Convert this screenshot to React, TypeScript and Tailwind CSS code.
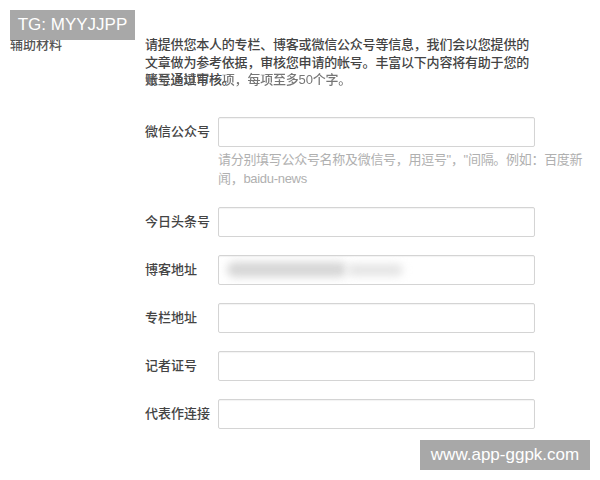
import React from 'react';

const FIELDS = ['今日头条号', '博客地址', '专栏地址', '记者证号', '代表作连接'];

const font = { fontFamily: '"Liberation Sans", "Noto Sans CJK SC", sans-serif' };

const Field: React.FC<{ label: string; blurred?: boolean }> = ({ label, blurred }) => (
    <div className="flex items-center h-[30px]">
        <div className="w-[73px] text-[13px] font-medium text-[#444]">{label}</div>
        <div className="relative w-[318px] h-[30px] border border-[#d4d4d4] rounded-[2px] bg-white shadow-[inset_0_1px_1px_rgba(0,0,0,0.05)] overflow-hidden">
            {blurred && (
                <div className="flex items-center h-full pl-[8px]">
                    <div className="w-[120px] h-[15px] rounded-full bg-[#d6d6d6] blur-[4px]" />
                    <div className="w-[56px] h-[12px] rounded-full bg-[#e4e4e4] blur-[4px]" />
                </div>
            )}
        </div>
    </div>
);

const App: React.FC = () => {
    return (
        <div className="relative w-[600px] h-[480px] bg-white overflow-hidden" style={font}>
            <div className="flex pt-[36px]">
                {/* left label */}
                <div className="w-[145px] pl-[10px] text-[13px] leading-[18px] font-medium text-[#555]">辅助材料</div>

                {/* right column */}
                <div className="w-[390px]">
                    <div className="relative text-[13px] leading-[17.5px] font-medium text-[#444] whitespace-nowrap tracking-[-0.2px]">
                        <p>请提供您本人的专栏、博客或微信公众号等信息，我们会以您提供的</p>
                        <p>文章做为参考依据，审核您申请的帐号。丰富以下内容将有助于您的</p>
                        <p>账号通过审核。</p>
                        {/* second sentence drawn over the third line, as in the source */}
                        <span className="absolute left-0 top-[35px] text-[#555] opacity-80">请至少填写一项，每项至多50个字。</span>
                    </div>

                    <div className="mt-[28px]">
                        <Field label="微信公众号" />
                        <div className="ml-[73px] mt-[3px] text-[13px] leading-[19px] text-[#b0b0b0] whitespace-nowrap tracking-[-0.3px]">
                            <p>请分别填写公众号名称及微信号，用逗号"，"间隔。例如：百度新</p>
                            <p>闻，baidu-news</p>
                        </div>
                    </div>

                    <div className="flex flex-col gap-[18px] mt-[19px]">
                        {FIELDS.map((f) => (
                            <Field key={f} label={f} blurred={f === '博客地址'} />
                        ))}
                    </div>
                </div>
            </div>

            {/* watermarks */}
            <div className="absolute left-[10px] top-[10px] w-[125px] h-[30px] bg-[#a8a8a8] flex items-center justify-center text-white text-[17px]" style={{ fontFamily: '"Liberation Sans", Arial, sans-serif' }}>
                TG: MYYJJPP
            </div>
            <div className="absolute left-[420px] top-[440px] w-[170px] h-[30px] bg-[#a8a8a8] flex items-center justify-center text-white text-[17px]" style={{ fontFamily: '"Liberation Sans", Arial, sans-serif' }}>
                www.app-ggpk.com
            </div>
        </div>
    );
};

export default App;
